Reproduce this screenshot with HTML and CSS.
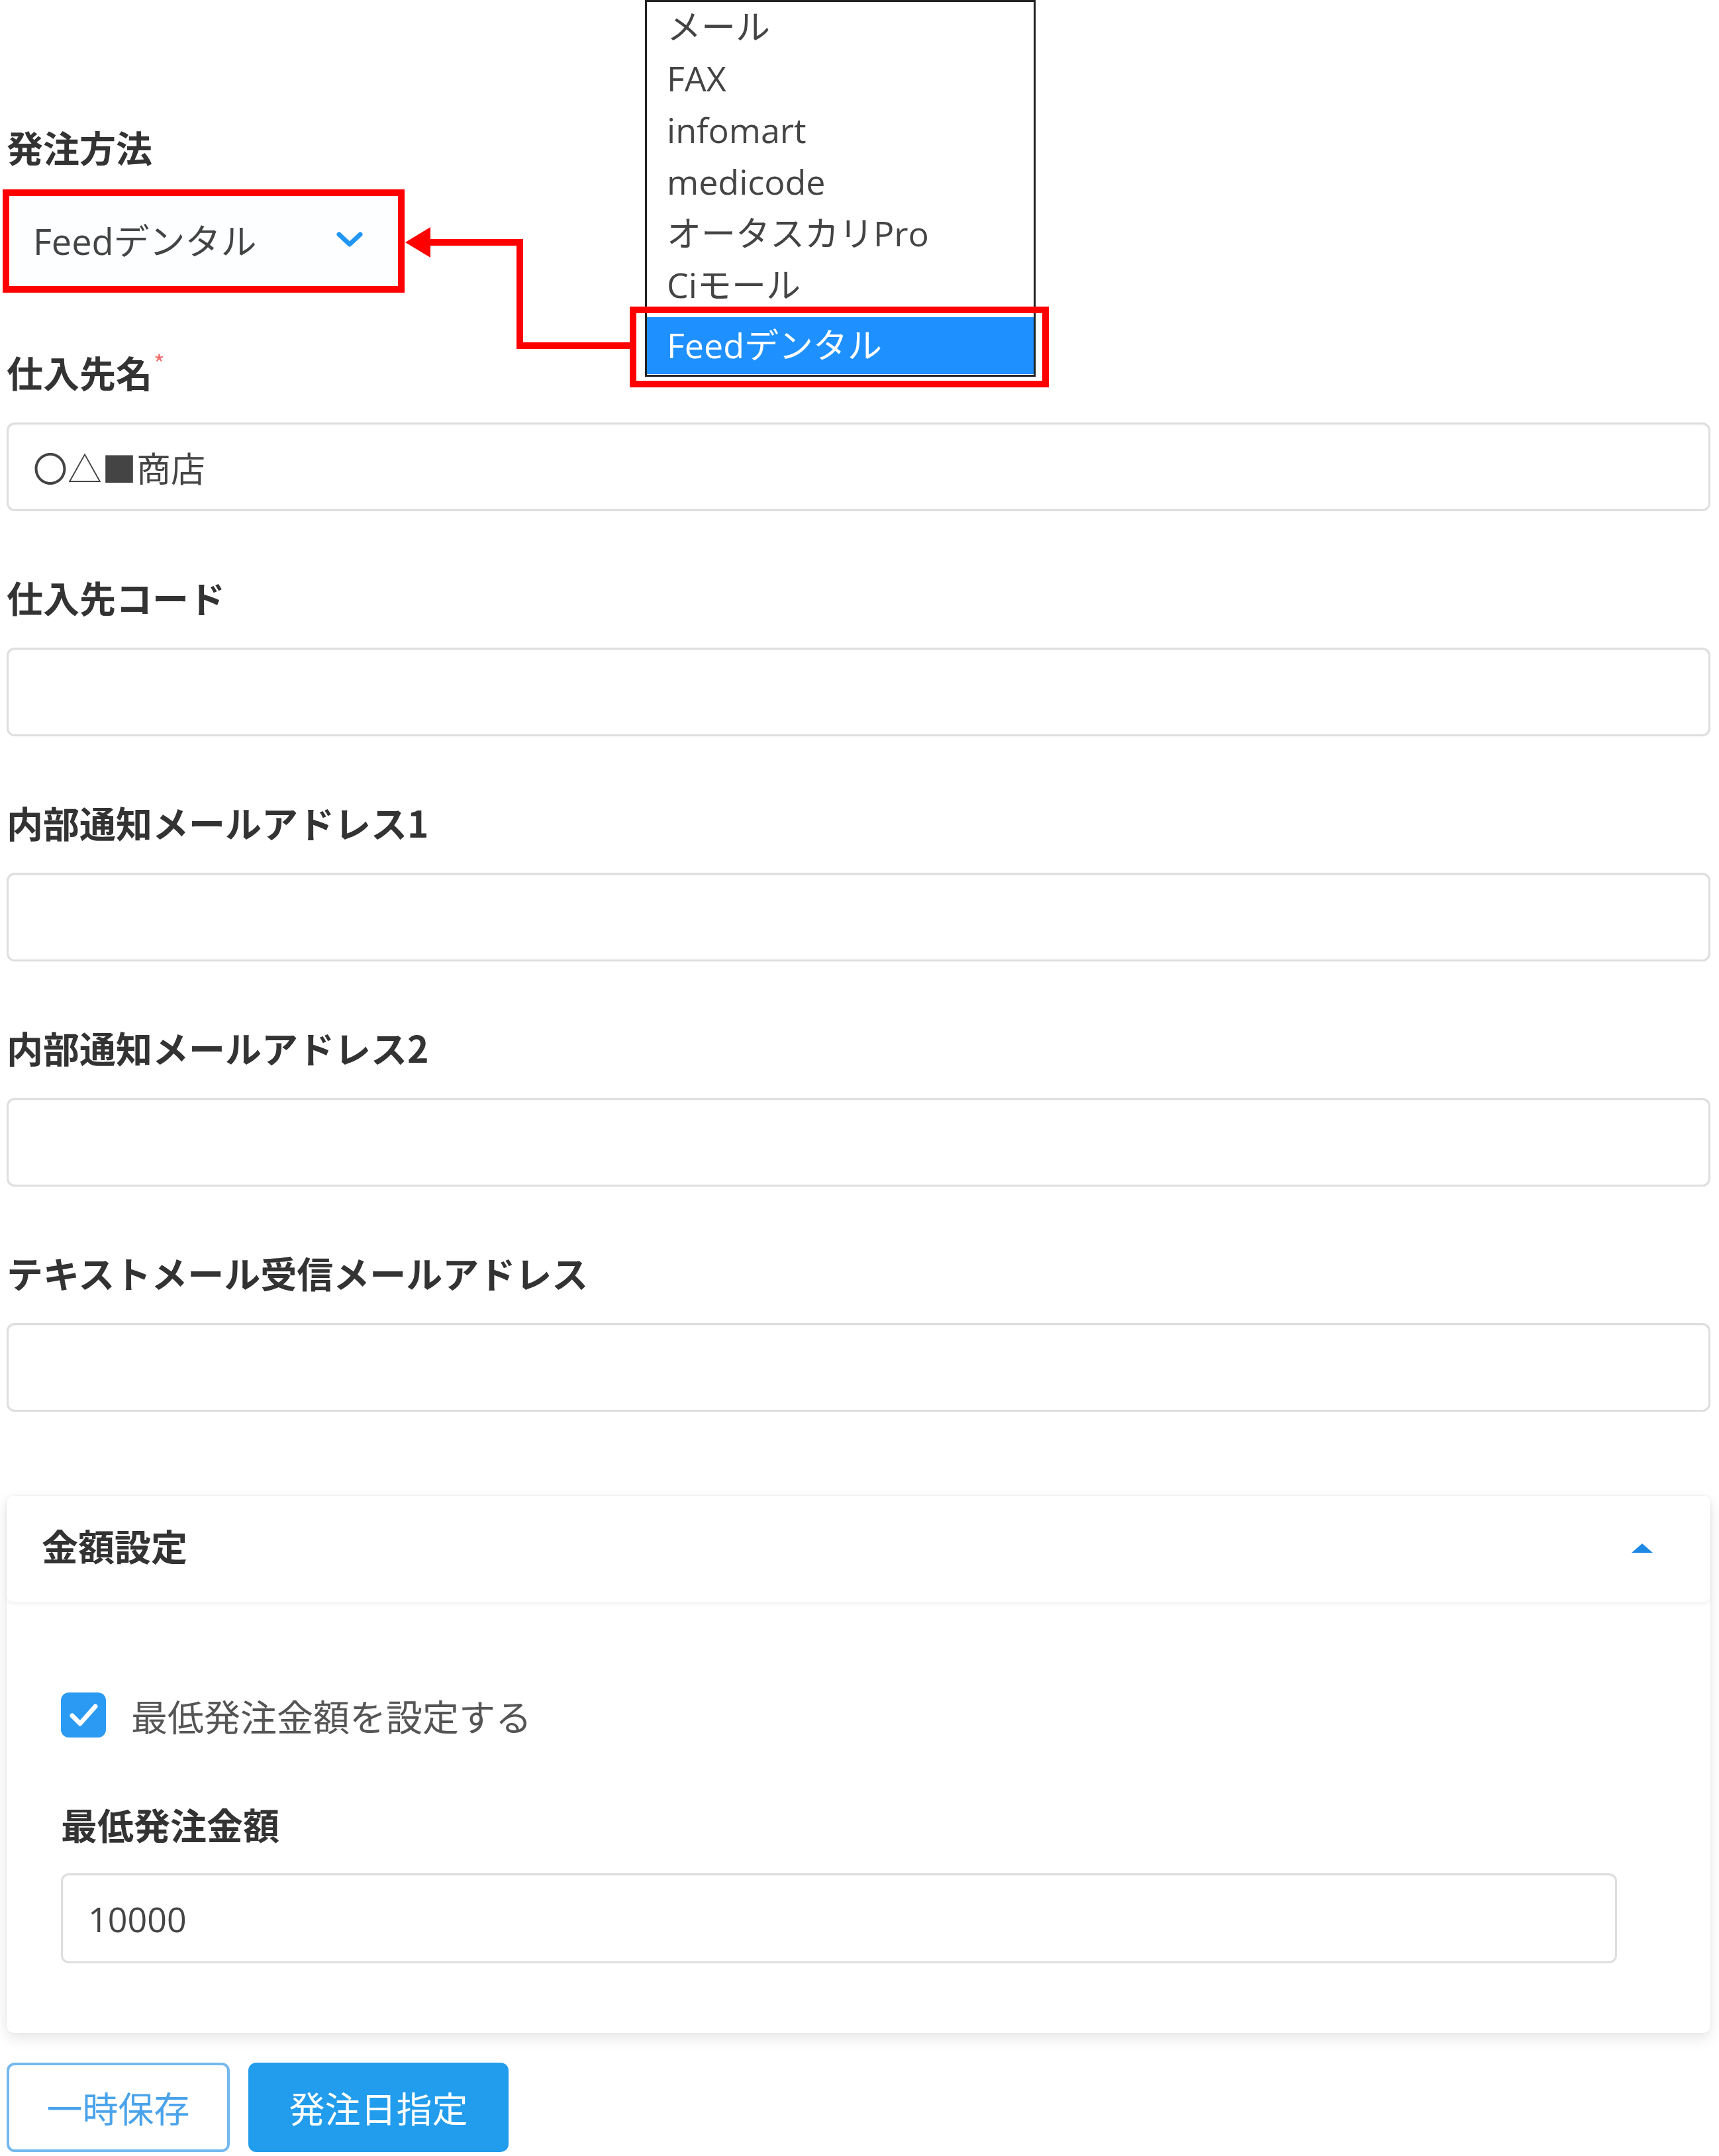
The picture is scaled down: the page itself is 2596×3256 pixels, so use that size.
FILE: index.html
```
<!DOCTYPE html>
<html lang="ja">
<head>
<meta charset="utf-8">
<title>発注方法</title>
<link rel="stylesheet" href="styles.css">
</head>
<body>
<div class="page">
  <div class="field field-first">
    <div class="label">発注方法</div>
    <div class="select-annot">
      <div class="select">
        <span class="select-value">Feedデンタル</span>
        <svg class="chevron" width="40" height="24" viewBox="0 0 40 24"><path d="M4 4 L20 19 L36 4" fill="none" stroke="#2196f3" stroke-width="7" stroke-linecap="round" stroke-linejoin="round"/></svg>
      </div>
    </div>
  </div>

  <div class="field field-second">
    <div class="label">仕入先名<span class="req">*</span></div>
    <div class="input">〇△■商店</div>
  </div>

  <div class="field">
    <div class="label">仕入先コード</div>
    <div class="input"></div>
  </div>

  <div class="field">
    <div class="label">内部通知メールアドレス1</div>
    <div class="input"></div>
  </div>

  <div class="field">
    <div class="label">内部通知メールアドレス2</div>
    <div class="input"></div>
  </div>

  <div class="field">
    <div class="label">テキストメール受信メールアドレス</div>
    <div class="input"></div>
  </div>

  <div class="card">
    <div class="card-head">
      <span class="card-title">金額設定</span>
      <svg class="tri" width="34" height="16" viewBox="0 0 34 16"><path d="M17 1 L33 15 L1 15 Z" fill="#1e88e5"/></svg>
    </div>
    <div class="card-body">
      <div class="check-row">
        <span class="checkbox">
          <svg width="68" height="68" viewBox="0 0 68 68"><path d="M17 35 L29 47 L52 21" fill="none" stroke="#fff" stroke-width="7" stroke-linecap="round" stroke-linejoin="round"/></svg>
        </span>
        <span class="check-label">最低発注金額を設定する</span>
      </div>
      <div class="label card-label">最低発注金額</div>
      <div class="input input-num">10000</div>
    </div>
  </div>

  <div class="buttons">
    <button class="btn btn-outline">一時保存</button>
    <button class="btn btn-fill">発注日指定</button>
  </div>

  <div class="dropdown-list">
    <div class="dd-inner">
      <div class="dd-item">メール</div>
      <div class="dd-item">FAX</div>
      <div class="dd-item">infomart</div>
      <div class="dd-item">medicode</div>
      <div class="dd-item">オータスカリPro</div>
      <div class="dd-item">Ciモール</div>
      <div class="dd-item dd-selected">Feedデンタル</div>
    </div>
  </div>

  <svg class="arrow" width="1000" height="600" viewBox="0 0 1000 600">
    <polyline points="955,522 785,522 785,366 640,366" fill="none" stroke="#ff0000" stroke-width="10"/>
    <polygon points="612,366 650,343 650,389" fill="#ff0000"/>
  </svg>
  <div class="annot-box"></div>
</div>
</body>
</html>
```
FILE: styles.css
```
html, body {
  margin: 0;
  padding: 0;
  background: #ffffff;
}

body {
  font-family: "Noto Sans CJK JP", "Noto Sans", sans-serif;
  color: #333333;
}

.page {
  position: relative;
  width: 2596px;
  height: 3256px;
  overflow: hidden;
  box-sizing: border-box;
  padding: 186px 13px 0 10px;
}

.field {
  display: flex;
  flex-direction: column;
  margin-top: 94px;
}

.field-first {
  margin-top: 0;
}

.field-second {
  margin-top: 84px;
}

.label {
  font-size: 55px;
  font-weight: 700;
  line-height: 70px;
  height: 70px;
  color: #333333;
  white-space: nowrap;
}

.req {
  color: #ef6c6c;
  font-size: 36px;
  font-weight: 400;
  vertical-align: top;
  position: relative;
  top: -14px;
  margin-left: 2px;
}

.field-first .label {
  margin-bottom: 30px;
}

.select-annot {
  width: 607px;
  height: 156px;
  box-sizing: border-box;
  border: 10px solid #ff0000;
  margin-left: -6px;
  background: #ffffff;
}

.select {
  height: 100%;
  display: flex;
  align-items: center;
  padding-left: 36px;
  padding-right: 53px;
  box-sizing: border-box;
  justify-content: space-between;
  background: #fcfeff;
}

.select-value {
  font-family: "Open Sans", "Noto Sans CJK JP", sans-serif;
  font-size: 54px;
  color: #444444;
  line-height: 1;
}

.chevron {
  display: block;
  margin-top: -4px;
}

.field .label + .input {
  margin-top: 42px;
}

.input {
  height: 134px;
  box-sizing: border-box;
  border: 3px solid #dedede;
  border-radius: 12px;
  box-shadow: inset 0 1px 2px rgba(0,0,0,0.05);
  display: flex;
  align-items: center;
  padding-left: 37px;
  font-size: 52px;
  color: #444444;
  background: #ffffff;
}

.card {
  margin-top: 127px;
  margin-right: 0;
  border-radius: 10px;
  background: #ffffff;
  box-shadow: 0 8px 22px rgba(0,0,0,0.10), 0 0 4px rgba(0,0,0,0.05);
}

.card-head {
  height: 160px;
  display: flex;
  align-items: center;
  justify-content: space-between;
  padding: 0 86px 0 53px;
  border-radius: 10px;
  box-shadow: 0 3px 6px rgba(0,0,0,0.06);
}

.card-title {
  font-size: 55px;
  font-weight: 700;
  color: #333333;
  margin-top: -12px;
}

.tri {
  display: block;
  margin-top: -2px;
}

.card-body {
  padding: 137px 141px 105px 82px;
  display: flex;
  flex-direction: column;
}

.check-row {
  display: flex;
  align-items: center;
  height: 68px;
  gap: 38px;
}

.checkbox {
  width: 68px;
  height: 68px;
  border-radius: 12px;
  background: #2b9af3;
  display: block;
}

.checkbox svg {
  display: block;
}

.check-label {
  font-size: 55px;
  color: #555555;
  line-height: 1;
}

.card-label {
  margin-top: 95px;
}

.card-body .card-label + .input {
  margin-top: 40px;
  height: 136px;
}

.input-num {
  font-family: "Open Sans", "Noto Sans CJK JP", sans-serif;
  padding-left: 38px;
}

.buttons {
  display: flex;
  gap: 28px;
  margin-top: 45px;
}

.btn {
  height: 135px;
  font-family: "Noto Sans CJK JP", sans-serif;
  font-size: 54px;
  border-radius: 12px;
  box-sizing: border-box;
  padding: 0;
  cursor: pointer;
}

.btn-outline {
  width: 337px;
  background: #ffffff;
  border: 4px solid #74b9f0;
  color: #4aa3ea;
}

.btn-fill {
  width: 393px;
  background: #229cec;
  border: 4px solid #229cec;
  color: #ffffff;
}

.dropdown-list {
  position: absolute;
  left: 974px;
  top: 0;
  width: 590px;
  height: 569px;
  box-sizing: border-box;
  border: 3px solid #222222;
  background: #ffffff;
  overflow: hidden;
}

.dd-inner {
  margin-top: -2px;
}

.dd-item {
  height: 78px;
  line-height: 78px;
  padding-left: 30px;
  font-family: "Open Sans", "Noto Sans CJK JP", sans-serif;
  font-size: 52px;
  color: #444444;
  white-space: nowrap;
}

.dd-selected {
  margin-top: 10px;
  height: 86px;
  line-height: 84px;
  background: #1e90ff;
  color: #ffffff;
}

.arrow {
  position: absolute;
  left: 0;
  top: 0;
}

.annot-box {
  position: absolute;
  left: 951px;
  top: 463px;
  width: 633px;
  height: 122px;
  box-sizing: border-box;
  border: 10px solid #ff0000;
}
```
